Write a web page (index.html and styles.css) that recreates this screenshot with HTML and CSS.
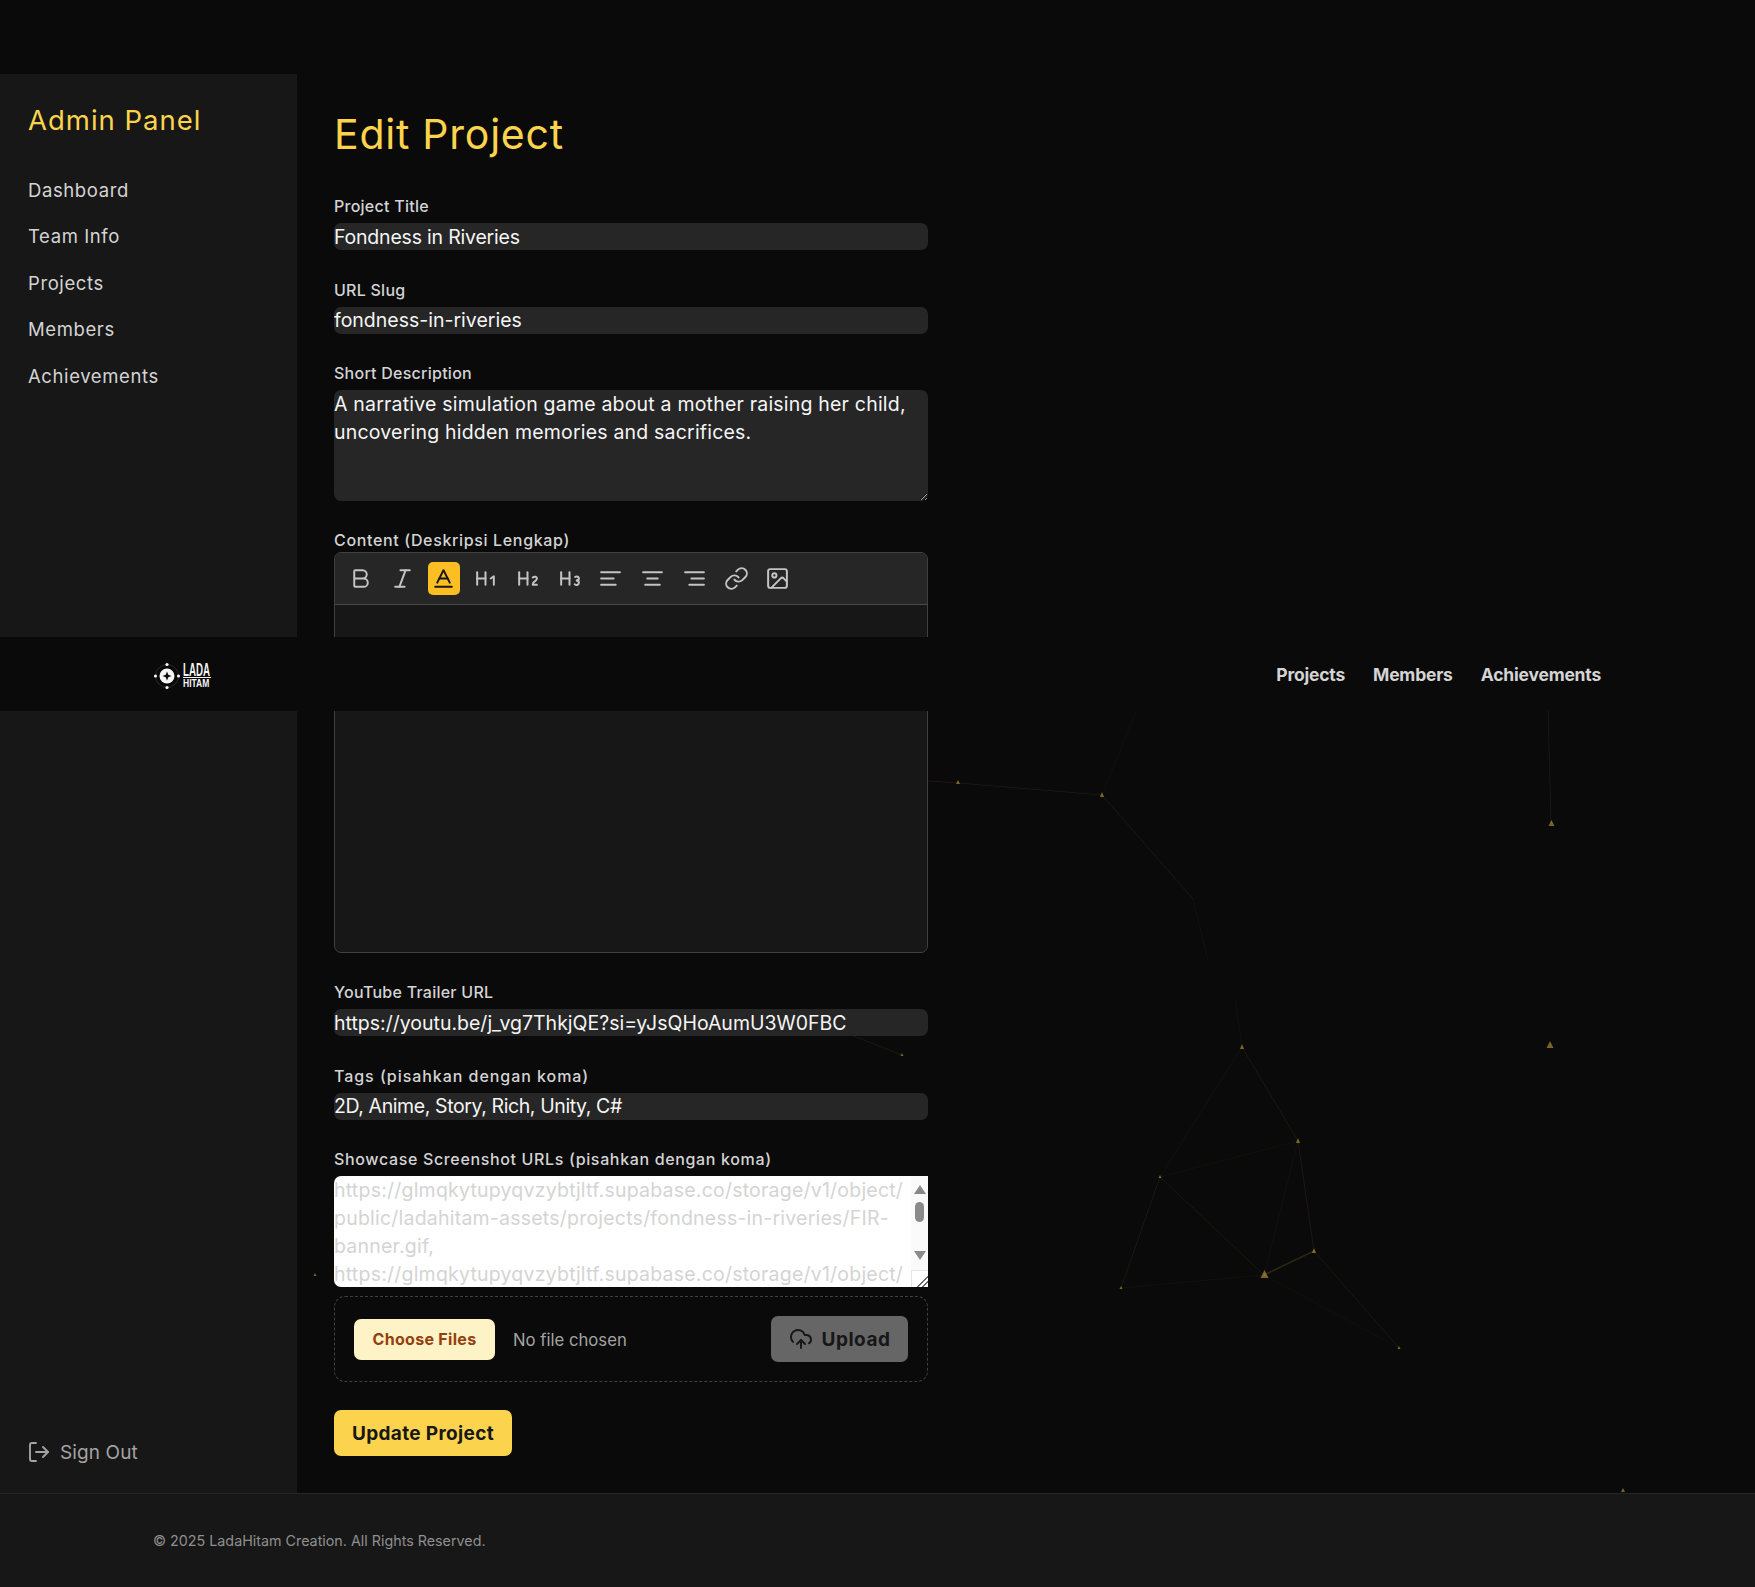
FILE: index.html
```html
<!DOCTYPE html>
<html lang="en">
<head>
    <title>Edit Project</title>
    <meta charset="UTF-8">
    <link rel="stylesheet" href="styles.css">
</head>
<body>
    <svg class="particles" width="1755" height="1587" viewBox="0 0 1755 1587">
        <g class="links">
            <path d="M928 781L958 783L1102 795"/>
            <path d="M1102 795L1193 899"/>
            <path d="M1551 824L1548 705"/>
            <path d="M851 1035L902 1055"/>
            <path d="M1242 1047L1298 1141L1314 1251L1399 1348"/>
            <path d="M1160 1177L1121 1288"/>
            <path d="M1160 1177L1264 1275"/>
            <path class="faint" d="M1102 795L1136 712"/>
            <path class="faint" d="M1193 899L1208 960"/>
            <path class="faint" d="M1298 1141L1160 1177"/>
            <path class="faint" d="M1121 1288L1264 1275"/>
            <path class="faint" d="M1235 1000L1242 1047L1160 1177"/>
            <path class="faint" d="M1298 1141L1264 1275L1399 1348"/>
            <path class="bright" d="M1264 1275L1314 1251"/>
        </g>
        <g class="nodes">
            <path d="M958 780l2 4h-4z"/>
            <path d="M1102 792l2 5h-4z"/>
            <path d="M1551.500 820l3 6h-6z"/>
            <path d="M902 1053l1.500 3h-3z"/>
            <path d="M315 1273l1.500 3h-3z"/>
            <path d="M1242 1044l2 5h-4z"/>
            <path d="M1550 1041l3.500 7h-7z"/>
            <path d="M1298 1138l2 5h-4z"/>
            <path d="M1160 1175l1.500 3h-3z"/>
            <path d="M1314 1248l2 5h-4z"/>
            <path d="M1264.500 1270l4 8h-8z"/>
            <path d="M1121 1286l1.500 3h-3z"/>
            <path d="M1399 1346l1.500 3h-3z"/>
            <path d="M1623 1488l2 4h-4z"/>
        </g>
    </svg>

    
    <header class="topnav">
        <a class="logo" href="#">
            <svg width="28" height="28" viewBox="0 0 28 28">
                <circle cx="14" cy="14" r="11.500" fill="none" stroke="#2a2a2a"/>
                <circle cx="14" cy="14" r="7.500" fill="#f5f5f5"/>
                <path d="M14 9.500l1.300 3.200 3.200 1.300-3.200 1.300-1.300 3.200-1.300-3.200-3.200-1.300 3.200-1.300z" fill="#0a0a0a"/>
                <circle cx="14" cy="2.500" r="1.600" fill="#f5f5f5"/>
                <circle cx="14" cy="25.500" r="1.600" fill="#f5f5f5"/>
                <circle cx="2.500" cy="14" r="1.600" fill="#f5f5f5"/>
                <circle cx="25.500" cy="14" r="1.600" fill="#f5f5f5"/>
            </svg>
            <span class="logo-text">
                <span class="logo-top">LADA</span>
                <span class="logo-bottom">HITAM</span>
            </span>
        </a>
        <nav class="topnav-links">
            <a href="#">Projects</a>
            <a href="#">Members</a>
            <a href="#">Achievements</a>
        </nav>
    </header>

    <div class="layout">
        <aside class="sidebar">
            <h2>Admin Panel</h2>
            <nav class="side-links">
                <a href="#">Dashboard</a>
                <a href="#">Team Info</a>
                <a href="#">Projects</a>
                <a href="#">Members</a>
                <a href="#">Achievements</a>
            </nav>
            <a class="signout" href="#">
                <svg class="icon" width="24" height="24" viewBox="0 0 24 24"><path d="M9 21H5a2 2 0 0 1-2-2V5a2 2 0 0 1 2-2h4"/><path d="M16 17l5-5-5-5"/><path d="M21 12H9"/></svg>
                Sign Out
            </a>
        </aside>

        <main class="content">
            <h1>Edit Project</h1>
            <form class="form">
                <label class="field">
                    <span class="label">Project Title</span>
                    <input class="box title" type="text" value="Fondness in Riveries">
                </label>
                <label class="field">
                    <span class="label">URL Slug</span>
                    <input class="box" type="text" value="fondness-in-riveries">
                </label>
                <label class="field">
                    <span class="label">Short Description</span>
                    <textarea class="box area">A narrative simulation game about a mother raising her child,
uncovering hidden memories and sacrifices.</textarea>
                </label>

                <div class="field">
                    <span class="label tight wide">Content (Deskripsi Lengkap)</span>
                    <div class="editor">
                        <div class="toolbar">
                            <button type="button" class="tool"><svg class="icon" width="25" height="25" viewBox="0 0 24 24"><path d="M6 12h9a4 4 0 0 1 0 8H7a1 1 0 0 1-1-1V5a1 1 0 0 1 1-1h7a4 4 0 0 1 0 8"/></svg></button>
                            <button type="button" class="tool"><svg class="icon" width="25" height="25" viewBox="0 0 24 24"><path d="M19 4h-9"/><path d="M14 20H5"/><path d="M15 4L9 20"/></svg></button>
                            <button type="button" class="tool active"><svg class="icon" width="25" height="25" viewBox="0 0 24 24"><path d="M4 20h16"/><path d="M6 16l6-12 6 12"/><path d="M8 12h8"/></svg></button>
                            <button type="button" class="tool"><svg class="icon" width="25" height="25" viewBox="0 0 24 24"><path d="M4 12h8"/><path d="M4 18V6"/><path d="M12 18V6"/><path d="M17 12l3-2v8"/></svg></button>
                            <button type="button" class="tool"><svg class="icon" width="25" height="25" viewBox="0 0 24 24"><path d="M4 12h8"/><path d="M4 18V6"/><path d="M12 18V6"/><path d="M21 18h-4c0-4 4-3 4-6 0-1.500-2-2.500-4-1"/></svg></button>
                            <button type="button" class="tool"><svg class="icon" width="25" height="25" viewBox="0 0 24 24"><path d="M4 12h8"/><path d="M4 18V6"/><path d="M12 18V6"/><path d="M17.500 10.500c1.700-1 3.500 0 3.500 1.500a2 2 0 0 1-2 2"/><path d="M17 17.500c2 1.500 4 .3 4-1.500a2 2 0 0 0-2-2"/></svg></button>
                            <button type="button" class="tool"><svg class="icon" width="25" height="25" viewBox="0 0 24 24"><path d="M21 6H3"/><path d="M15 12H3"/><path d="M17 18H3"/></svg></button>
                            <button type="button" class="tool"><svg class="icon" width="25" height="25" viewBox="0 0 24 24"><path d="M21 6H3"/><path d="M17 12H7"/><path d="M19 18H5"/></svg></button>
                            <button type="button" class="tool"><svg class="icon" width="25" height="25" viewBox="0 0 24 24"><path d="M21 6H3"/><path d="M21 12H9"/><path d="M21 18H7"/></svg></button>
                            <button type="button" class="tool"><svg class="icon" width="25" height="25" viewBox="0 0 24 24"><path d="M10 13a5 5 0 0 0 7.540.540l3-3a5 5 0 0 0-7.070-7.070l-1.720 1.710"/><path d="M14 11a5 5 0 0 0-7.540-.540l-3 3a5 5 0 0 0 7.070 7.070l1.710-1.710"/></svg></button>
                            <button type="button" class="tool"><svg class="icon" width="25" height="25" viewBox="0 0 24 24"><rect x="3" y="3" width="18" height="18" rx="2"/><circle cx="9" cy="9" r="2"/><path d="M21 15l-3.086-3.086a2 2 0 0 0-2.828 0L6 21"/></svg></button>
                        </div>
                        <div class="editor-body"></div>
                    </div>
                </div>

                <label class="field">
                    <span class="label">YouTube Trailer URL</span>
                    <input class="box" type="text" value="https://youtu.be/j_vg7ThkjQE?si=yJsQHoAumU3W0FBC">
                </label>
                <label class="field">
                    <span class="label wider">Tags (pisahkan dengan koma)</span>
                    <input class="box tags" type="text" value="2D, Anime, Story, Rich, Unity, C#">
                </label>

                <div class="showcase">
                    <span class="label wide">Showcase Screenshot URLs (pisahkan dengan koma)</span>
                    <div class="urls">
                        <textarea class="urls-text">https://glmqkytupyqvzybtjltf.supabase.co/storage/v1/object/
public/ladahitam-assets/projects/fondness-in-riveries/FIR-
banner.gif,
https://glmqkytupyqvzybtjltf.supabase.co/storage/v1/object/</textarea>
                        <div class="scrollbar">
                            <span class="arrow up"></span>
                            <span class="thumb"></span>
                            <span class="arrow down"></span>
                        </div>
                        <span class="corner"></span>
                    </div>
                    <div class="uploader">
                        <input class="files" type="file" multiple>
                        <button type="button" class="upload">
                            <svg class="icon" width="24" height="24" viewBox="0 0 24 24"><path d="M12 13v8"/><path d="M4 14.900A7 7 0 1 1 15.710 8h1.790a4.500 4.500 0 0 1 2.500 8.240"/><path d="M8 17l4-4 4 4"/></svg>
                            Upload
                        </button>
                    </div>
                </div>

                <button type="button" class="submit">Update Project</button>
            </form>
        </main>
    </div>

    <footer class="footer">
        <p>&copy; 2025 LadaHitam Creation. All Rights Reserved.</p>
    </footer>
</body>
</html>
```

FILE: styles.css
```css
* {
    box-sizing: border-box;
}

body {
    margin: 0;
    position: relative;
    padding-top: 74px;
    background-color: #0a0a0a;
    color: #d4d4d4;
    font-family: Inter, "Noto Sans", sans-serif;
}

a {
    color: inherit;
    text-decoration: none;
}

.icon {
    fill: none;
    stroke: currentColor;
    stroke-width: 1.9;
    stroke-linecap: round;
    stroke-linejoin: round;
    flex: none;
}

/* background dots */
.particles {
    position: absolute;
    top: 0;
    left: 0;
}

.links path {
    fill: none;
    stroke: #fcd34d;
    stroke-opacity: .07;
}

.links .faint {
    stroke-opacity: .03;
}

.links .bright {
    stroke-width: 1.5;
    stroke-opacity: .14;
}

.nodes path {
    fill: #fcd34d;
    fill-opacity: .45;
}

/* top nav */
.topnav {
    position: absolute;
    top: 637px;
    left: 0;
    right: 0;
    height: 74px;
    z-index: 5;
    padding: 0 154px 0 153px;
    display: flex;
    align-items: center;
    justify-content: space-between;
    background-color: #0a0a0a;
}

.logo {
    display: flex;
    align-items: center;
    gap: 2px;
    margin-top: 3.5px;
}

.logo-text {
    display: block;
    width: 28px;
    color: #f5f5f5;
    font-family: "Liberation Sans", sans-serif;
    font-weight: 700;
}

.logo-top,
.logo-bottom {
    display: block;
    white-space: nowrap;
    transform-origin: 0 0;
}

.logo-top {
    height: 14px;
    border-bottom: 1px solid #f5f5f5;
    font-size: 18px;
    line-height: 13px;
    width: 52px;
    transform: scaleX(.54);
}

.logo-bottom {
    margin-top: 2.500px;
    height: 8px;
    font-size: 10px;
    line-height: 8px;
    transform: scaleX(.85);
}

.topnav-links {
    display: flex;
    gap: 28px;
    font-size: 17.500px;
    font-weight: 700;
    letter-spacing: -.2px;
}

/* page columns */
.layout {
    display: flex;
    position: relative;
    height: 1419px;
}

.sidebar {
    width: 297px;
    flex: none;
    padding: 28px 28px 26px;
    display: flex;
    flex-direction: column;
    background-color: #171717;
}

.sidebar h2 {
    margin: 0 0 28.5px;
    font-size: 27.500px;
    line-height: 36px;
    font-weight: 400;
    letter-spacing: 1px;
    color: #fcd34d;
}

.side-links a {
    display: block;
    font-size: 18.500px;
    line-height: 46.5px;
    letter-spacing: .6px;
}

.signout {
    margin-top: auto;
    margin-left: -1px;
    display: flex;
    align-items: center;
    gap: 9px;
    height: 30px;
    font-size: 19px;
    letter-spacing: .1px;
    color: #a3a3a3;
}

.content {
    flex: 1;
    padding: 35px 0 37px 37px;
}

.content h1 {
    margin: 0 0 37px;
    font-size: 41px;
    line-height: 50px;
    font-weight: 400;
    letter-spacing: .75px;
    color: #fcd34d;
}

.form {
    width: 594px;
}

/* form fields */
.field {
    display: block;
    margin-bottom: 29.5px;
}

.label {
    display: block;
    margin-bottom: 7px;
    font-size: 16px;
    line-height: 20px;
    font-weight: 500;
    letter-spacing: .25px;
}

.label.wide {
    letter-spacing: .65px;
}

.label.wider {
    letter-spacing: .95px;
}

.label.tight {
    margin-bottom: 1.500px;
}

.box {
    display: block;
    width: 100%;
    height: 27px;
    padding: 0;
    border: 0;
    border-radius: 7px;
    background-color: #262626;
    color: #f5f5f5;
    font-family: inherit;
    font-size: 19.5px;
    outline: none;
}

.title {
    letter-spacing: -.2px;
}

.tags {
    letter-spacing: -.4px;
}

.area {
    height: 110.5px;
    line-height: 28px;
    letter-spacing: .2px;
}

/* rich text editor */
.editor {
    border: 1px solid #404040;
    border-radius: 7px;
    overflow: hidden;
    background-color: #171717;
}

.toolbar {
    display: flex;
    gap: 9.25px;
    height: 52px;
    padding: 9px;
    background-color: #262626;
    border-bottom: 1px solid #4a4a4a;
}

.tool {
    width: 32.5px;
    height: 33px;
    padding: 0;
    border: 0;
    border-radius: 5px;
    display: flex;
    align-items: center;
    justify-content: center;
    background: none;
    color: #c4c4c4;
}

.tool.active {
    background-color: #fbbf24;
    color: #171717;
}

.editor-body {
    height: 347px;
}

/* showcase urls */
.urls {
    position: relative;
    height: 111px;
    border-radius: 7px 0 0 7px;
    overflow: hidden;
    background-color: #fff;
}

.urls-text {
    display: block;
    width: 100%;
    height: 100%;
    padding: 0 17px 0 0;
    border: 0;
    background: none;
    color: #d4d4d4;
    font-family: inherit;
    font-size: 19.5px;
    line-height: 28px;
    letter-spacing: .22px;
    white-space: pre;
    overflow: hidden;
    resize: none;
    outline: none;
}

.scrollbar {
    position: absolute;
    top: 0;
    right: 0;
    width: 17px;
    height: 94px;
    display: flex;
    flex-direction: column;
    align-items: center;
    background-color: #fafafa;
}

.arrow {
    width: 0;
    height: 0;
    border-left: 6px solid transparent;
    border-right: 6px solid transparent;
}

.arrow.up {
    margin-top: 9px;
    border-bottom: 9px solid #8a8a8a;
}

.arrow.down {
    margin-top: 29px;
    border-top: 9px solid #8a8a8a;
}

.thumb {
    width: 9px;
    height: 20px;
    margin-top: 8px;
    border-radius: 5px;
    background-color: #8a8a8a;
}

.corner {
    position: absolute;
    right: 0;
    bottom: 0;
    width: 17px;
    height: 17px;
    border-top: 1px solid #e5e5e5;
    border-left: 1px solid #e5e5e5;
    background: linear-gradient(135deg, transparent 0 14.5px, #666 14.5px 16px, transparent 16px 18px, #666 18px 19.5px, transparent 19.5px);
}

.uploader {
    margin-top: 9px;
    height: 86px;
    padding: 0 19px;
    display: flex;
    align-items: center;
    justify-content: space-between;
    border: 1px dashed #404040;
    border-radius: 11px;
}

.files {
    color: #a3a3a3;
    font-family: inherit;
    font-size: 16.700px;
}

.files::file-selector-button {
    width: 141px;
    height: 41px;
    margin-right: 18px;
    border: 0;
    border-radius: 7px;
    background-color: #fef3c7;
    color: #92400e;
    font-family: inherit;
    font-size: 16px;
    font-weight: 700;
    letter-spacing: .3px;
}

.upload {
    width: 137px;
    height: 46px;
    border: 0;
    border-radius: 7px;
    display: flex;
    align-items: center;
    justify-content: center;
    gap: 9px;
    background-color: #666;
    color: #171717;
    font-family: inherit;
    font-size: 19px;
    font-weight: 700;
    letter-spacing: .5px;
}

.submit {
    display: block;
    width: 178px;
    height: 46px;
    margin-top: 28px;
    border: 0;
    border-radius: 7px;
    background-color: #fcd34d;
    color: #171717;
    font-family: inherit;
    font-size: 19px;
    font-weight: 700;
    letter-spacing: .35px;
}

/* footer */
.footer {
    position: relative;
    height: 94px;
    padding-left: 153px;
    display: flex;
    align-items: center;
    background-color: #171717;
    border-top: 1px solid #262626;
    font-size: 14.300px;
    color: #8f8f8f;
}

.footer p {
    margin: 0;
}
```
